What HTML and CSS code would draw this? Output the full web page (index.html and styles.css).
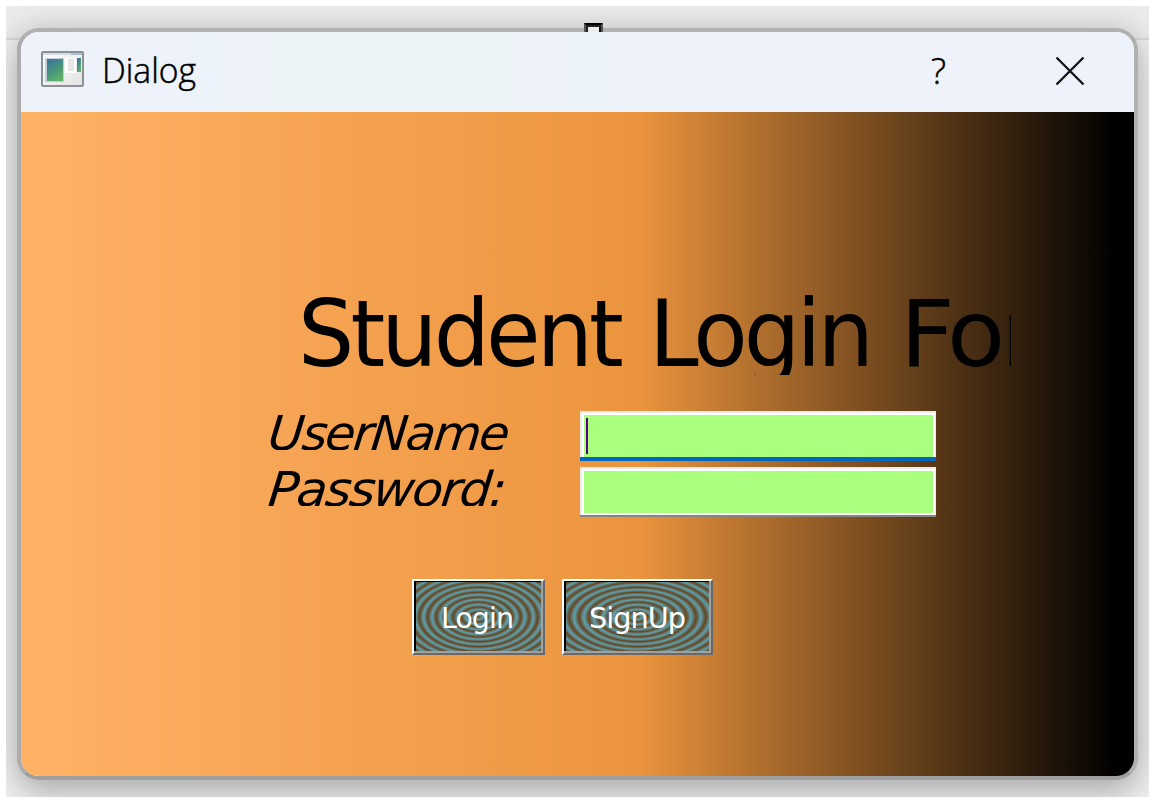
FILE: index.html
```html
<!DOCTYPE html>
<html lang="en">
<head>
<meta charset="utf-8">
<title>Dialog</title>
<link rel="stylesheet" href="styles.css">
</head>
<body>
<div class="desktop">
  <div class="desktop-bar"></div>
  <main class="dialog">
    <header class="titlebar">
      <svg class="app-icon" width="43" height="36" viewBox="0 0 43 36">
        <defs>
          <linearGradient id="pane" x1="0" y1="0" x2=".5" y2="1"><stop offset="0" stop-color="#3d70a5"/><stop offset=".55" stop-color="#45917d"/><stop offset="1" stop-color="#5daf6b"/></linearGradient>
          <linearGradient id="sheet" x1="0" y1="0" x2="1" y2="1"><stop offset="0" stop-color="#fff"/><stop offset="1" stop-color="#e2e2e2"/></linearGradient>
        </defs>
        <rect x="1" y="1" width="41" height="34" rx="1" fill="url(#sheet)" stroke="#8c9196" stroke-width="2"/>
        <path d="M2 2H41V4H2z" fill="#d5dbe5"/><path d="M30 2H41V4H30z" fill="#aebfd6"/>
        <path d="M4 7H23V31H4z" fill="#c5cfdc"/>
        <path d="M6 8H22V30H6z" fill="url(#pane)"/>
        <path d="M24 7H35V22H24z" fill="#fff"/>
        <path d="M27 8H33V20H27z" fill="#e6e7e7"/>
        <path d="M36 7H40V21H36z" fill="url(#pane)"/>
      </svg>
      <svg class="caption" width="110" height="80"><text class="ui" x="-1" y="51" font-size="34" textLength="94" lengthAdjust="spacingAndGlyphs">Dialog</text></svg>
      <svg class="help" width="20" height="80"><text class="ui" x="1" y="52" font-size="37" textLength="15" lengthAdjust="spacingAndGlyphs">?</text></svg>
      <svg class="close" width="30" height="30" viewBox="0 0 30 30"><path d="M1.5 1.5L28.5 28.5M28.5 1.5L1.5 28.5"/></svg>
    </header>
    <section class="content">
      <svg class="heading" width="710" height="85">
        <g font-size="92">
          <text x="-3" y="76" textLength="322" lengthAdjust="spacingAndGlyphs">Student</text>
          <text x="348" y="76" textLength="221" lengthAdjust="spacingAndGlyphs">Login</text>
          <text x="599" y="76" textLength="136" lengthAdjust="spacingAndGlyphs">For</text>
        </g>
      </svg>
      <div class="row">
        <svg class="label" width="250" height="50"><text transform="translate(1 39) skewX(-6)" font-size="48" textLength="239" lengthAdjust="spacingAndGlyphs">UserName</text></svg>
        <div class="field focused"><i class="caret"></i></div>
      </div>
      <div class="row">
        <svg class="label" width="250" height="50"><text transform="translate(1 39) skewX(-6)" font-size="48" textLength="236" lengthAdjust="spacingAndGlyphs">Password:</text></svg>
        <div class="field"></div>
      </div>
      <div class="buttons">
        <div class="button login"><svg width="129" height="72"><text x="27" y="47" font-size="29" textLength="72" lengthAdjust="spacingAndGlyphs">Login</text></svg></div>
        <div class="button signup"><svg width="147" height="72"><text x="25" y="47" font-size="29" textLength="96" lengthAdjust="spacingAndGlyphs">SignUp</text></svg></div>
      </div>
    </section>
  </main>
  <div class="handle"></div>
</div>
</body>
</html>
```
FILE: styles.css
```css
* { box-sizing: border-box; }
body { margin: 0; padding: 6px 3px 1px 6px; width: 1152px; height: 798px; overflow: hidden; background: #fff; font-family: "DejaVu Sans", sans-serif; }
svg { display: block; flex: none; }
.desktop { position: relative; width: 1143px; height: 791px; overflow: hidden; background: #f0f0f0; }
.desktop-bar { height: 34px; background: #ebebeb; border-bottom: 2px solid #dadada; }
.handle { position: absolute; left: 578px; top: 17px; width: 19px; height: 9px; border: solid #000; border-width: 2px 2px 0; border-left-color: #555; border-right-color: #555; background: #eee; box-shadow: inset 2px 2px #222, inset -2px 0 #111; }
.dialog { position: absolute; left: 11px; top: 22px; width: 1121px; height: 752px; border: 4px solid; border-color: #b1b1b1 #b0b0b0 #9f9f9f #acacac; border-radius: 22px; overflow: hidden; background: #eef3fb; box-shadow: 0 16px 32px rgba(0,0,0,.2), 0 0 32px rgba(0,0,0,.14); }
.titlebar { height: 80px; padding-left: 20px; display: flex; align-items: center; background: linear-gradient(90deg, #eef3fb 0 14%, #edf4f8 24% 42%, #eef3fb 54%); }
.app-icon { margin-top: -6px; }
.caption { margin-left: 19px; }
.help { margin-left: 717px; }
.close { margin-left: 105px; margin-top: -3px; fill: none; stroke: #111; stroke-width: 2.3; }
.ui { font-family: "Open Sans", "Noto Sans", sans-serif; font-weight: 300; fill: #000; stroke: #000; stroke-width: .5px; }
.content { height: 664px; padding-top: 178px; background: linear-gradient(90deg, #ffb266 0, #eb943d 55.5%, #000 98.5%); }
.heading { margin-left: 280px; overflow: hidden; letter-spacing: -4px; }
.heading + .row { margin-top: 36px; }
.row { display: flex; height: 50px; margin: 0 0 6px 245px; }
.label { font-style: italic; letter-spacing: -2px; clip-path: inset(0 8px 11px 0); }
.field { width: 356px; height: 50px; margin-left: 64px; background: #aaff7f; box-shadow: inset 0 -2px #858585, inset 2px 2px #ececec, inset -1px 0 #ececec, inset 4px 4px #fff, inset -3px -4px #fff; }
.field.focused { padding: 7px 0 0 6px; box-shadow: inset 0 -4px #0067c0, inset 2px 2px #ececec, inset -1px 0 #ececec, inset 4px 4px #fff, inset -3px 0 #fff; }
.caret { display: block; width: 2px; height: 36px; background: #55007f; }
.buttons { display: flex; gap: 17px; padding: 56px 0 0 391px; letter-spacing: -1px; }
.button { height: 76px; border: 2px solid; border-color: #fff #696969 #696969 #fff; fill: #fff; box-shadow: inset 0 -2px #a0a0a0, inset -2px 0 #a0a0a0, inset 2px 1px #000; }
.login { width: 133px; background: repeating-radial-gradient(65px 38px at 50% 50%, #65451f 0, #5fa1b0 6.5%, #65451f 13%); }
.signup { width: 151px; background: repeating-radial-gradient(75px 38px at 50% 50%, #65451f 0, #5fa1b0 6.5%, #65451f 13%); }
```
